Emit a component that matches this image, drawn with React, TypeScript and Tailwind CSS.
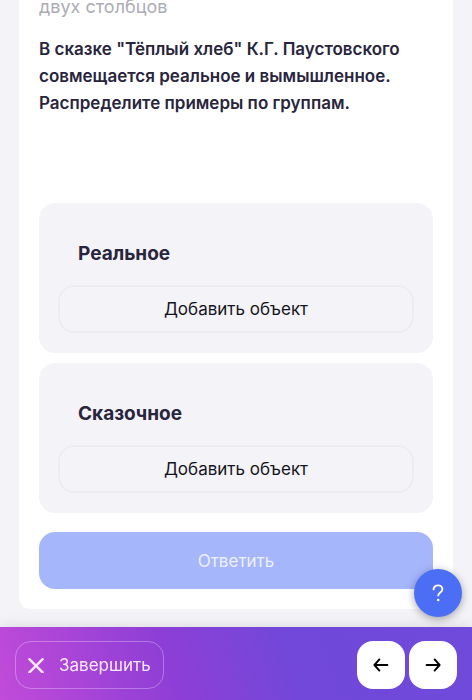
import React from 'react';

interface Group {
  id: string;
  title: string;
}

const groups: Group[] = [
  { id: 'real', title: 'Реальное' },
  { id: 'fairy', title: 'Сказочное' },
];

const GroupPanel: React.FC<{ group: Group }> = ({ group }) => (
  <section
    aria-labelledby={group.id}
    className="rounded-2xl bg-[#f4f3f8] px-[19px] pt-[37px] pb-5"
  >
    <h2 id={group.id} className="mb-[17px] px-5 text-[19px] leading-7 font-bold text-[#28253d]">
      {group.title}
    </h2>
    <button
      type="button"
      className="h-12 w-full rounded-2xl border-2 border-[#edecf1] text-[17px] leading-6 text-[#141420]"
    >
      Добавить объект
    </button>
  </section>
);

const ArrowIcon: React.FC<{ className?: string }> = ({ className }) => (
  <svg
    viewBox="0 0 16 16"
    className={`size-4 ${className ?? ''}`}
    fill="none"
    stroke="currentColor"
    strokeWidth="1.9"
    strokeLinecap="round"
    strokeLinejoin="round"
    aria-hidden="true"
  >
    <path d="M1.6 8h13M9.6 2.4 14.6 8l-5 5.6" />
  </svg>
);

const App: React.FC = () => {
  return (
    <div className="flex min-h-screen flex-col bg-[#f4f3f8] font-['Inter','Noto_Sans',sans-serif]">
      <main className="mx-[19px] mb-[91px] flex-1 rounded-b-xl bg-white px-5 pb-5">
        <p className="text-[18px] leading-[14px] text-[#adacb4]">двух столбцов</p>
        <h1 className="mt-[22px] text-[17px] leading-[27px] font-semibold text-[#28253d]">
          В сказке "Тёплый хлеб" К.Г. Паустовского совмещается реальное и вымышленное.
          Распределите примеры по группам.
        </h1>

        <div className="mt-[86px] flex flex-col gap-[10px]">
          {groups.map((group) => (
            <GroupPanel key={group.id} group={group} />
          ))}
        </div>

        <button
          type="button"
          disabled
          className="mt-[19px] h-[57px] w-full rounded-2xl bg-[#a6b6fb] text-[17px] leading-6 text-[#edf0fe]"
        >
          Ответить
        </button>
      </main>

      <footer className="fixed inset-x-0 bottom-0 flex items-center justify-between bg-linear-[72deg,#c24bd9_0%,#8e3ed6_36%,#7148d9_62%,#6f4adb_100%] px-[15px] pt-[14px] pb-[11px] shadow-[0_0_14px_rgba(0,0,0,0.12)]">
        <button
          type="button"
          className="flex h-12 items-center gap-[15px] rounded-2xl border border-white/30 px-3 text-[17px] leading-6 text-[#f8e9fd]"
        >
          <svg
            viewBox="0 0 16 16"
            className="size-4"
            fill="none"
            stroke="currentColor"
            strokeWidth="2.4"
            strokeLinecap="round"
            aria-hidden="true"
          >
            <path d="m1.4 2.2 13.2 13.2M14.6 2.2 1.4 15.4" />
          </svg>
          Завершить
        </button>

        <nav className="flex gap-1" aria-label="Навигация по заданиям">
          <button
            type="button"
            aria-label="Назад"
            className="flex size-12 items-center justify-center rounded-2xl bg-white text-black"
          >
            <ArrowIcon className="rotate-180" />
          </button>
          <button
            type="button"
            aria-label="Вперёд"
            className="flex size-12 items-center justify-center rounded-2xl bg-white text-black"
          >
            <ArrowIcon />
          </button>
        </nav>
      </footer>

      <button
        type="button"
        aria-label="Помощь"
        className="fixed right-[10px] bottom-[83px] flex size-12 items-center justify-center rounded-full bg-[#4b6ef5] text-white shadow-[0_2px_8px_rgba(0,0,0,0.35)]"
      >
        <svg
          viewBox="0 0 12 18"
          className="h-[18px] w-3"
          fill="none"
          stroke="currentColor"
          strokeWidth="1.9"
          strokeLinecap="round"
          strokeLinejoin="round"
          aria-hidden="true"
        >
          <path d="M1.6 5.4C1.6 3 3.5 1.4 6 1.4s4.4 1.6 4.4 3.9c0 3-4.2 3.4-4.2 6.3" />
          <circle cx="6.2" cy="16" r="1.3" fill="currentColor" stroke="none" />
        </svg>
      </button>
    </div>
  );
};

export default App;
